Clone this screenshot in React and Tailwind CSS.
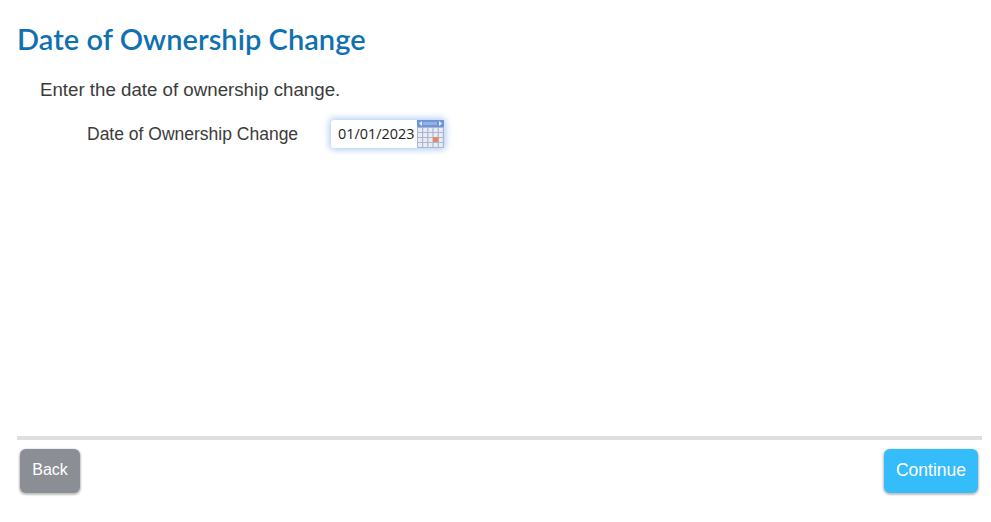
const CalendarIcon = () => (
  <svg width="27" height="28" viewBox="0 0 27 28" className="shrink-0">
    <rect x="0" y="0" width="27" height="28" fill="#a9b7d3" />
    <rect x="0" y="0" width="27" height="7" fill="#6f94d8" />
    <rect x="6" y="2" width="14" height="3" fill="#93b1e4" />
    <path d="M5 1 L2 3.5 L5 6 Z" fill="#e6eefb" />
    <path d="M22 1 L25 3.5 L22 6 Z" fill="#e6eefb" />
    {[0, 1, 2, 3].map((r) =>
      [0, 1, 2, 3, 4].map((c) => (
        <rect
          key={`${r}-${c}`}
          x={1 + c * 5.2}
          y={8 + r * 5}
          width="4"
          height="4"
          fill="#e9ecf3"
        />
      ))
    )}
    {/* today marker */}
    <rect x="16" y="17" width="5.5" height="5" fill="#e8875f" />
  </svg>
)

export default function App() {
  return (
    <div className="w-[991px] h-[522px] bg-white flex flex-col pl-[17px] pr-[9px] font-['Liberation_Sans',sans-serif] text-[#3b3b3b] overflow-hidden">
      <h1 className="font-['Lato',sans-serif] font-semibold text-[29px] leading-[36px] text-[#0f71b1] mt-[21px] tracking-[0.05px]">
        Date of Ownership Change
      </h1>

      <p className="text-[18.7px] leading-[22px] mt-[22px] ml-[23px]">Enter the date of ownership change.</p>

      <div className="flex items-center mt-[19px] ml-[70px]">
        <label className="text-[17.5px] leading-[22px] w-[244px]">Date of Ownership Change</label>
        <div className="flex items-center h-[28px] w-[113px] bg-white rounded-[3px] shadow-[0_0_6px_2px_rgba(120,165,240,0.55)]">
          <span className="flex-1 pl-[7px] font-['Open_Sans',sans-serif] text-[14.4px] leading-[28px] text-[#222]">01/01/2023</span>
          <CalendarIcon />
        </div>
      </div>

      <div className="flex-1" />

      <div className="h-[4px] bg-[#dedede]" />

      <div className="flex justify-between items-start pl-[3px] pr-[4px] pt-[9px] pb-[29px]">
        <button className="h-[44px] w-[60px] pb-[2px] rounded-[6px] bg-[#8c8e96] text-white text-[16px] shadow-[0_1px_2px_1px_rgba(0,0,0,0.25)]">
          Back
        </button>
        <button className="h-[44px] w-[94px] pb-[2px] rounded-[6px] bg-[#35bcfb] text-white text-[17.5px] shadow-[0_1px_2px_1px_rgba(0,0,0,0.25)]">
          Continue
        </button>
      </div>
    </div>
  )
}
